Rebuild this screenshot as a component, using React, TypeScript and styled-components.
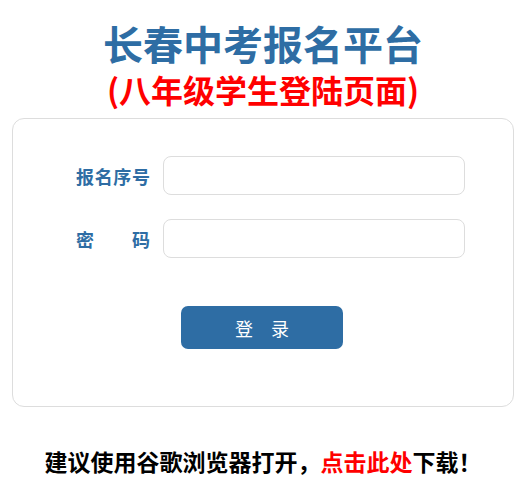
import styled, { createGlobalStyle } from "styled-components";

const GlobalStyle = createGlobalStyle`
  html, body {
    margin: 0;
    padding: 0;
    background: #fff;
  }
  body {
    font-family: "Noto Sans CJK SC", "Microsoft YaHei", sans-serif;
  }
  * {
    box-sizing: border-box;
  }
`;

const Page = styled.div`
  width: 526px;
  padding: 21px 12px 0;
`;

const Title = styled.h1`
  margin: 0;
  text-align: center;
  font-size: 40px;
  line-height: 44px;
  font-weight: 700;
  color: #2e6da4;
`;

const SubTitle = styled.h2`
  margin: 6px 0 0;
  text-align: center;
  font-size: 32px;
  line-height: 36px;
  font-weight: 700;
  color: #ff0000;
`;

const Card = styled.form`
  margin-top: 11px;
  border: 1px solid #dddddd;
  border-radius: 12px;
  padding: 37px 0 57px 63px;
`;

const Row = styled.div`
  display: grid;
  grid-template-columns: 74px 302px;
  column-gap: 13px;
  align-items: center;
  & + & {
    margin-top: 24px;
  }
`;

const Label = styled.label`
  font-size: 18px;
  font-weight: 700;
  color: #2e6da4;
  text-align: justify;
  text-align-last: justify;
  white-space: nowrap;
`;

const Input = styled.input`
  height: 39px;
  width: 100%;
  border: 1px solid #dddddd;
  border-radius: 8px;
  padding: 0 10px;
  font-size: 16px;
  outline: none;
`;

const LoginButton = styled.button`
  display: block;
  margin: 48px 0 0 105px;
  width: 162px;
  height: 43px;
  border: none;
  border-radius: 7px;
  background: #2e6da4;
  color: #fff;
  font-family: "Noto Sans CJK SC", sans-serif;
  font-size: 18px;
  cursor: pointer;
`;

const Tip = styled.p`
  margin: 38px 0 0;
  text-align: center;
  font-size: 23px;
  line-height: 32px;
  font-weight: 700;
  color: #000;
`;

const Link = styled.a`
  color: #ff0000;
  text-decoration: none;
`;

export default function App() {
  return (
    <>
      <GlobalStyle />
      <Page>
        <Title>长春中考报名平台</Title>
        <SubTitle>(八年级学生登陆页面)</SubTitle>
        <Card onSubmit={(e) => e.preventDefault()}>
          <Row>
            <Label htmlFor="bmxh">报名序号</Label>
            <Input id="bmxh" type="text" />
          </Row>
          <Row>
            <Label htmlFor="mm">密 码</Label>
            <Input id="mm" type="password" />
          </Row>
          <LoginButton type="submit">登　录</LoginButton>
        </Card>
        <Tip>
          建议使用谷歌浏览器打开，<Link href="#">点击此处</Link>下载！
        </Tip>
      </Page>
    </>
  );
}
